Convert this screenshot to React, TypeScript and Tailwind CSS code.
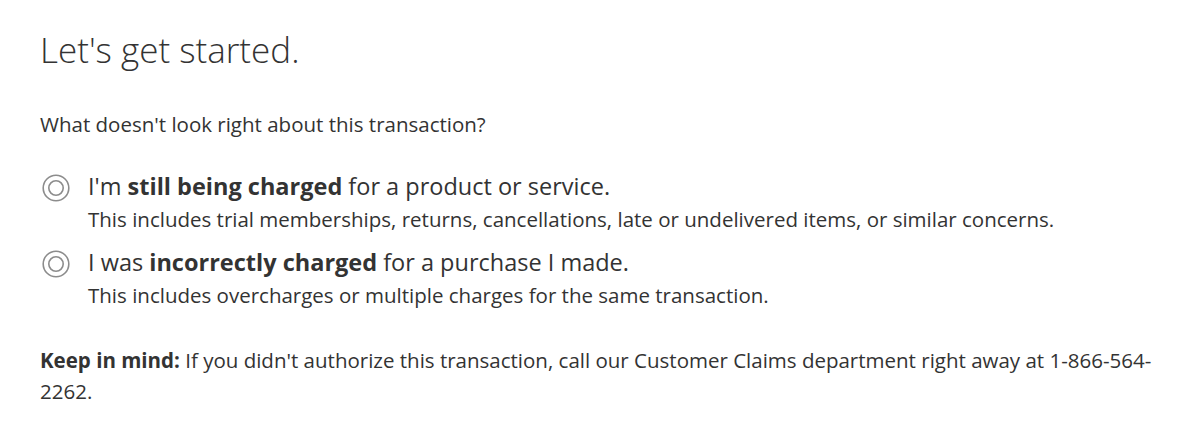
import React from "react";

function Radio() {
  return (
    <svg width="28" height="28" viewBox="0 0 28 28" className="block">
      <circle cx="14" cy="14" r="12.8" fill="none" stroke="#8c8c8c" strokeWidth="1.6" />
      <circle cx="14" cy="14" r="7.2" fill="none" stroke="#8c8c8c" strokeWidth="1.6" />
    </svg>
  );
}

function Option({ children, sub }: { children: React.ReactNode; sub: string }) {
  return (
    <label className="flex items-start">
      <span className="w-[48px] shrink-0 pl-[2px] pt-[2.5px]">
        <Radio />
      </span>
      <span className="flex flex-col">
        <span className="text-[23.5px] leading-[30px]">{children}</span>
        <span className="mt-[3px] text-[20.5px] leading-[30px]">{sub}</span>
      </span>
    </label>
  );
}

export default function App() {
  return (
    <div className="w-[1200px] h-[433px] bg-white px-10 pt-[30px] text-[#333333] font-['Open_Sans',sans-serif]">
      <h1 className="text-[35px] leading-[40px] font-light text-[#333333]">Let's get started.</h1>
      <p className="mt-[39px] text-[20.5px] leading-[30px]">What doesn't look right about this transaction?</p>
      <div className="mt-[32px] flex flex-col gap-[13px]">
        <Option sub="This includes trial memberships, returns, cancellations, late or undelivered items, or similar concerns.">
          I'm <b className="font-bold">still being charged</b> for a product or service.
        </Option>
        <Option sub="This includes overcharges or multiple charges for the same transaction.">
          I was <b className="font-bold">incorrectly charged</b> for a purchase I made.
        </Option>
      </div>
      <p className="mt-[34.5px] text-[20.5px] leading-[31px]">
        <b className="font-bold">Keep in mind:</b> If you didn't authorize this transaction, call our Customer Claims department right away at 1-866-564-2262.
      </p>
    </div>
  );
}
